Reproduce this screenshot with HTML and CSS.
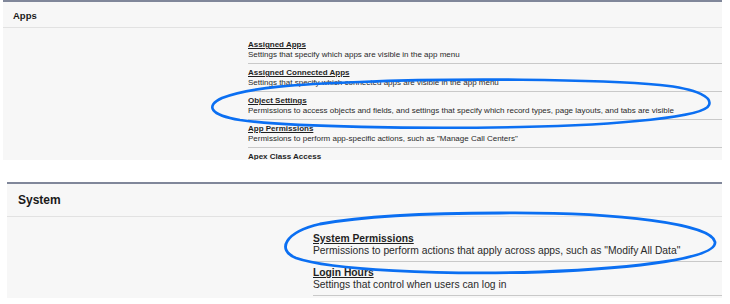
FILE: index.html
```html
<!DOCTYPE html>
<html>
<head>
<meta charset="utf-8">
<link rel="stylesheet" href="styles.css">
</head>
<body>
<div class="page">
  <section class="panel panel-apps">
    <div class="panel-head">Apps</div>
    <div class="panel-body">
      <div class="row">
        <a class="row-title">Assigned Apps</a>
        <div class="row-desc">Settings that specify which apps are visible in the app menu</div>
      </div>
      <div class="row">
        <a class="row-title">Assigned Connected Apps</a>
        <div class="row-desc">Settings that specify which connected apps are visible in the app menu</div>
      </div>
      <div class="row">
        <a class="row-title">Object Settings</a>
        <div class="row-desc">Permissions to access objects and fields, and settings that specify which record types, page layouts, and tabs are visible</div>
      </div>
      <div class="row">
        <a class="row-title">App Permissions</a>
        <div class="row-desc">Permissions to perform app-specific actions, such as "Manage Call Centers"</div>
      </div>
      <div class="row">
        <a class="row-title">Apex Class Access</a>
      </div>
    </div>
  </section>

  <section class="panel panel-system">
    <div class="panel-head">System</div>
    <div class="panel-body">
      <div class="row">
        <a class="row-title">System Permissions</a>
        <div class="row-desc">Permissions to perform actions that apply across apps, such as "Modify All Data"</div>
      </div>
      <div class="row">
        <a class="row-title">Login Hours</a>
        <div class="row-desc">Settings that control when users can log in</div>
      </div>
    </div>
  </section>

  <svg class="marks" width="730" height="304" viewBox="0 0 730 304">
    <path d="M360 82 C 450 78, 600 79, 660 85 C 700 89, 712 98, 709 105 C 705 117, 620 125, 520 127 C 420 129, 290 127, 240 120 C 210 115, 205 106, 222 98 C 250 87, 300 84, 360 82 Z" fill="none" stroke="#0b6ff2" stroke-width="2.6" stroke-linejoin="round"/>
    <path d="M500 213 C 620 212, 712 224, 715 242 C 717 258, 640 268, 540 272 C 440 275, 330 270, 296 258 C 276 250, 285 232, 320 224 C 370 215, 440 213, 500 213 Z" fill="none" stroke="#0b6ff2" stroke-width="2.8" stroke-linejoin="round"/>
  </svg>
</div>
</body>
</html>
```

FILE: styles.css
```css
html, body {
  margin: 0;
  padding: 0;
  background: #ffffff;
}

.page {
  position: relative;
  width: 730px;
  height: 304px;
  overflow: hidden;
  font-family: "Liberation Sans", Arial, sans-serif;
  color: #1a1a1a;
}

.panel {
  background: #f7f7f7;
  border-top: 2px solid #80879a;
  overflow: hidden;
}

.panel-apps {
  margin-left: 3px;
  width: 719px;
  height: 158px;
}

.panel-system {
  margin-top: 22px;
  margin-left: 7px;
  width: 715px;
  height: 114px;
}

.panel-head {
  font-weight: bold;
  border-bottom: 1px solid #e2e2e2;
  box-sizing: border-box;
}

.panel-apps .panel-head {
  height: 26px;
  padding: 8px 0 0 10px;
  font-size: 9.5px;
  line-height: 11px;
}

.panel-system .panel-head {
  height: 33px;
  padding: 9px 0 0 11px;
  font-size: 12px;
  line-height: 15px;
}

.panel-apps .panel-body {
  padding: 8px 0 0 245px;
}

.panel-system .panel-body {
  padding: 11px 0 0 306px;
}

.row {
  border-bottom: 1px solid #c9c9c9;
}

.row-title {
  display: block;
  font-weight: bold;
  text-decoration: underline;
  color: #1f1f1f;
}

.row-desc {
  color: #2a2a2a;
  white-space: nowrap;
}

.panel-apps .row {
  padding: 4px 0 3px 0;
  font-size: 8px;
}

.panel-apps .row-title,
.panel-apps .row-desc {
  line-height: 10px;
}

.panel-system .row {
  padding: 5px 0 4px 0;
  font-size: 10.3px;
}

.panel-system .row-title,
.panel-system .row-desc {
  line-height: 12px;
}

.marks {
  position: absolute;
  left: 0;
  top: 0;
  pointer-events: none;
}
```
